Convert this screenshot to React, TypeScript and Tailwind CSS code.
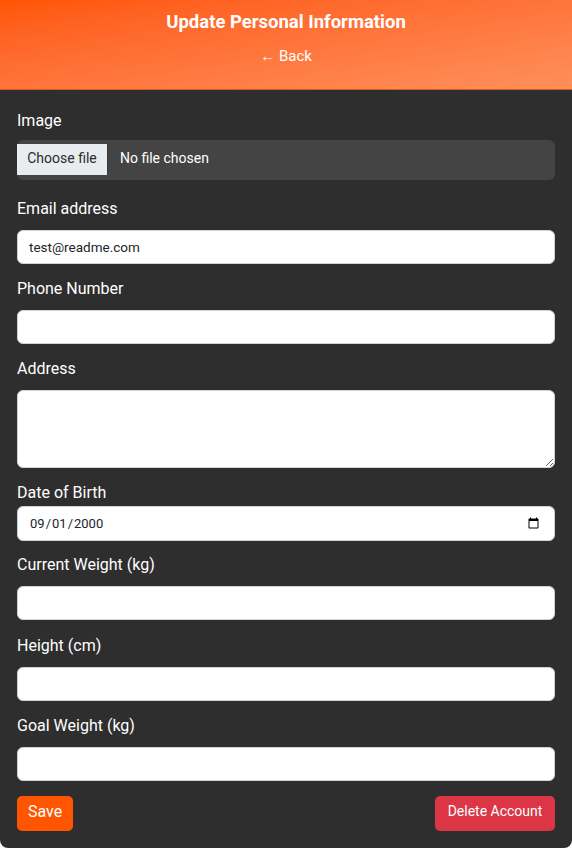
import React from "react";

const labelCls = "block pt-[1.5px] text-[16px] leading-6 text-white";
const inputCls =
  "block w-full h-[34px] rounded-[6px] border border-[#cfd2d6] bg-white px-[11px] text-[13.5px] text-[#212529] outline-none";

export default function App() {
  return (
    <div className="min-h-[848px] bg-white font-['Roboto',sans-serif]">
      <div className="w-[572px] overflow-hidden rounded-b-lg bg-[#2e2e2e]">
        <header className="h-[90px] border-b border-[#e0561c] bg-linear-to-br from-[#ff5500] to-[#ff8f5a] pt-2 text-center text-white">
          <h1 className="text-[18.5px] font-bold leading-7">Update Personal Information</h1>
          <a className="mt-2 inline-block text-[15px] leading-6 text-white">← Back</a>
        </header>
        <form className="px-[17px] pt-[17px] pb-[17px]">
          <div className="mb-[15px]">
            <label className={`${labelCls} mb-[7.5px]`}>Image</label>
            <div className="flex h-[40px] items-stretch rounded-[6px] bg-[#444444] pt-[4px] pb-[5px]">
              <span className="flex w-[91px] items-center justify-center border-r border-[#3a3a3a] bg-[#e9ecef] pb-[3px] text-[14px] text-[#2b2b2b]">
                Choose file
              </span>
              <span className="flex items-center pb-[3px] pl-[12px] text-[14px] text-white">No file chosen</span>
            </div>
          </div>
          <div className="mb-[11px]">
            <label className={`${labelCls} mb-[9.5px]`}>Email address</label>
            <input className={inputCls} defaultValue="test@readme.com" />
          </div>
          <div className="mb-[11px]">
            <label className={`${labelCls} mb-[9.5px]`}>Phone Number</label>
            <input className={inputCls} />
          </div>
          <div className="mb-[11px]">
            <label className={`${labelCls} mb-[9.5px]`}>Address</label>
            <textarea className="block h-[78px] w-full rounded-[6px] border border-[#cfd2d6] bg-white px-[11px] py-[6px] text-[13.5px] outline-none" />
          </div>
          <div className="mb-[10px]">
            <label className={`${labelCls} mb-[1.5px]`}>Date of Birth</label>
            <input
              type="date"
              className="block h-[35px] w-full rounded-[6px] border border-[#cfd2d6] bg-white pl-[11px] pr-[12px] text-[13px] text-[#212529] outline-none"
              defaultValue="2000-09-01"
            />
          </div>
          <div className="mb-[12px]">
            <label className={`${labelCls} mb-[9.5px]`}>Current Weight (kg)</label>
            <input className={inputCls} />
          </div>
          <div className="mb-[11px]">
            <label className={`${labelCls} mb-[9.5px]`}>Height (cm)</label>
            <input className={inputCls} />
          </div>
          <div className="mb-[15px]">
            <label className={`${labelCls} mb-[9.5px]`}>Goal Weight (kg)</label>
            <input className={inputCls} />
          </div>
          <div className="flex items-center justify-between">
            <button
              type="button"
              className="h-[35px] rounded-[5px] bg-[#ff5500] px-[11px] pb-[3px] text-[16px] text-white"
            >
              Save
            </button>
            <button
              type="button"
              className="h-[35px] w-[120px] rounded-[5px] bg-[#dc3545] pb-[4px] text-[14px] text-white"
            >
              Delete Account
            </button>
          </div>
        </form>
      </div>
    </div>
  );
}
